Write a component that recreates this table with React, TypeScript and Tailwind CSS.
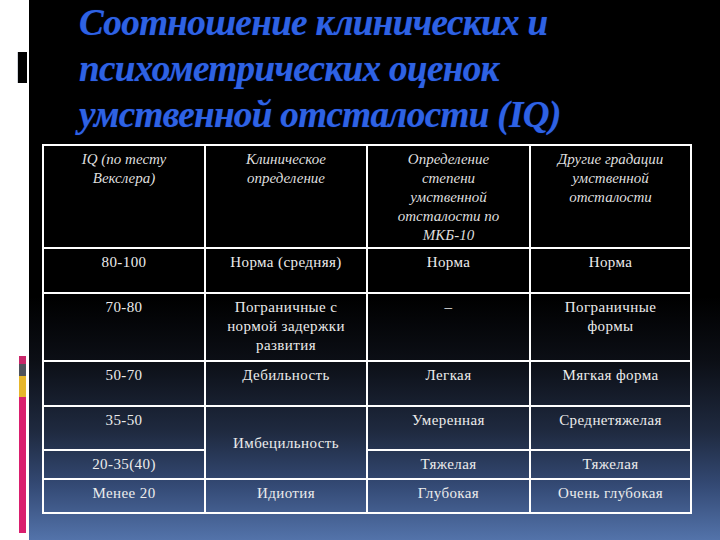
import React from 'react';

type Row = {
  iq: string;
  clinical?: string;
  clinicalSpan?: number;
  icd: string;
  other: string;
  h: string;
};

const rows: Row[] = [
  { iq: '80-100', clinical: 'Норма (средняя)', icd: 'Норма', other: 'Норма', h: 'h-[45px]' },
  {
    iq: '70-80',
    clinical: 'Пограничные с нормой задержки развития',
    icd: '–',
    other: 'Пограничные формы',
    h: 'h-[68px]',
  },
  { iq: '50-70', clinical: 'Дебильность', icd: 'Легкая', other: 'Мягкая форма', h: 'h-[45px]' },
  { iq: '35-50', clinical: 'Имбецильность', clinicalSpan: 2, icd: 'Умеренная', other: 'Среднетяжелая', h: 'h-[44px]' },
  { iq: '20-35(40)', icd: 'Тяжелая', other: 'Тяжелая', h: 'h-[29px]' },
  { iq: 'Менее 20', clinical: 'Идиотия', icd: 'Глубокая', other: 'Очень глубокая', h: 'h-[34px]' },
];

const box = 'border-2 border-white text-center px-2 pb-0';
const cell = `${box} align-top pt-[4px]`;

export default function App() {
  return (
    <div className="flex w-[720px] h-[540px] bg-white overflow-hidden [font-family:'Liberation_Serif','DejaVu_Serif','Times_New_Roman',serif]">
      {/* left decorative strip */}
      <div className="w-[29px] shrink-0 flex flex-col">
        <div className="mt-[52px] ml-[17px] w-[10px] h-[31px] bg-black border-l border-gray-300" />
        <div className="mt-[273px] ml-[19px] w-[7px] h-[177px] flex flex-col">
          <div className="h-[8px] bg-[#c9276a]" />
          <div className="h-[12px] bg-[#4f535c]" />
          <div className="h-[21px] bg-[#e6b62c]" />
          <div className="flex-1 bg-[#d91f6e]" />
        </div>
      </div>

      {/* slide */}
      <div className="flex-1 flex flex-col bg-[linear-gradient(to_bottom,#000_0%,#000_55%,#0c0f16_67%,#1f2a40_80%,#344a75_90%,#5373aa_100%)]">
        <h1 className="pl-[50px] pt-[0px] text-[37px] leading-[46px] font-bold italic text-[#2e62e4] tracking-[-0.6px] [text-shadow:0_0_1px_#0b2a8a]">
          Соотношение клинических и
          <br />
          психометрических оценок
          <br />
          умственной отсталости (IQ)
        </h1>

        <table className="mt-[6px] ml-[13px] w-[648px] border-collapse border-2 border-white text-[#ececec] table-fixed">
          <colgroup>
            <col className="w-[162px]" />
            <col className="w-[162px]" />
            <col className="w-[163px]" />
            <col className="w-[161px]" />
          </colgroup>
          <thead>
            <tr className="h-[103px]">
              {[
                'IQ (по тесту Векслера)',
                'Клиническое определение',
                'Определение степени умственной отсталости по МКБ-10',
                'Другие градации умственной отсталости',
              ].map((t, i) => (
                <th
                  key={i}
                  className={`${cell} font-normal italic text-[15px] leading-[19px] text-[#dedede] ${i === 2 ? 'px-[22px]' : i === 3 ? 'px-[18px]' : 'px-[28px]'}`}
                >
                  {t}
                </th>
              ))}
            </tr>
          </thead>
          <tbody className="text-[15px] leading-[19px] tracking-[0.4px]">
            {rows.map((r, i) => (
              <tr key={i} className={r.h}>
                <td className={cell}>{r.iq}</td>
                {r.clinical !== undefined && (
                  <td
                    rowSpan={r.clinicalSpan}
                    className={r.clinicalSpan ? `${box} align-middle px-[14px] pt-[2px]` : `${cell} px-[14px]`}
                  >
                    {r.clinical}
                  </td>
                )}
                <td className={cell}>{r.icd}</td>
                <td className={`${cell} px-[24px]`}>{r.other}</td>
              </tr>
            ))}
          </tbody>
        </table>
      </div>
    </div>
  );
}
